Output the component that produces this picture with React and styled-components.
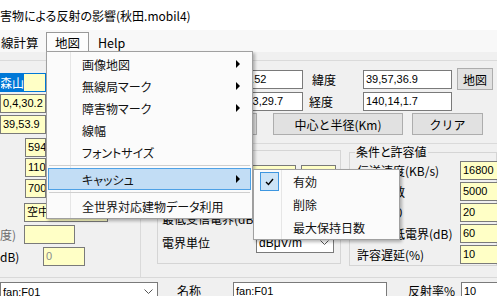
import styled, { createGlobalStyle } from "styled-components";

const GlobalStyle = createGlobalStyle`
  html, body {
    margin: 0;
    padding: 0;
  }
  body {
    width: 497px;
    height: 296px;
    overflow: hidden;
    background: #f0f0f0;
    font-family: "Noto Sans CJK JP", "Noto Sans", sans-serif;
    font-size: 12px;
    color: #000;
    font-feature-settings: "palt" 1;
  }
`;

const Window = styled.div`
  position: relative;
  width: 497px;
  height: 296px;
  overflow: hidden;
  display: flex;
  flex-direction: column;
`;

const TitleBar = styled.div`
  height: 30px;
  flex: none;
  background: #fff;
  display: flex;
  align-items: center;
  font-size: 12px;
  white-space: nowrap;
`;

const MenuBar = styled.div`
  height: 22px;
  flex: none;
  background: #f8f8f8;
  display: flex;
  align-items: stretch;
`;

const MenuTitle = styled.div`
  width: ${(p) => p.$w}px;
  box-sizing: border-box;
  display: flex;
  align-items: center;
  padding-left: ${(p) => p.$pad}px;
  margin-top: 2px;
  border: 1px solid ${(p) => (p.$open ? "#999" : "transparent")};
  border-bottom: none;
  background: ${(p) => (p.$open ? "#fdfdfd" : "transparent")};
  font-size: 12.5px;
`;

const Strip = styled.div`
  height: 8px;
  flex: none;
  border-bottom: 1px solid #dadada;
`;

const Upper = styled.div`
  height: 216px;
  flex: none;
  display: flex;
  border-bottom: 1px solid #d9d9d9;
`;

const LeftPanel = styled.div`
  width: 141px;
  flex: none;
  box-sizing: border-box;
  border-right: 1px solid #dadada;
  padding-top: 12px;
  display: flex;
  flex-direction: column;
`;

const RightPanel = styled.div`
  flex: 1;
  display: flex;
  flex-direction: column;
  min-width: 0;
`;

const Row = styled.div`
  display: flex;
  align-items: center;
  height: ${(p) => p.$h || 19}px;
  margin-top: ${(p) => p.$mt || 0}px;
  flex: none;
  white-space: nowrap;
`;

const Field = styled.div`
  width: ${(p) => p.$w}px;
  margin-left: ${(p) => p.$ml || 0}px;
  height: 19px;
  flex: none;
  box-sizing: border-box;
  border: 1px solid ${(p) => (p.$focus ? "#0078d7" : "#7a7a7a")};
  background: ${(p) => (p.$yellow ? "#ffffc6" : "#fff")};
  color: ${(p) => (p.$dim ? "#8a8a8a" : "#000")};
  font-family: "Liberation Sans", "Noto Sans CJK JP", sans-serif;
  font-size: 11px;
  line-height: 17px;
  padding-left: 2px;
  overflow: hidden;
  white-space: nowrap;
`;

const Selected = styled.span`
  background: #0078d7;
  color: #fff;
  font-family: "Noto Sans CJK JP", sans-serif;
  font-size: 12px;
  margin-left: -3px;
`;

const Label = styled.span`
  width: ${(p) => p.$w}px;
  margin-left: ${(p) => p.$ml || 0}px;
  flex: none;
  color: ${(p) => (p.$dim ? "#6d6d6d" : "#000")};
  font-size: 12px;
  overflow: hidden;
`;

const Button = styled.button`
  width: ${(p) => p.$w}px;
  margin-left: ${(p) => p.$ml || 0}px;
  height: 22px;
  flex: none;
  box-sizing: border-box;
  border: 1px solid #adadad;
  background: #e1e1e1;
  font-family: inherit;
  font-size: 12px;
  padding: 0;
  color: #000;
`;

const TopFields = styled.div`
  flex: none;
  padding: 7px 0 8px;
  border-bottom: 1px solid #dadada;
`;

const GroupRow = styled.div`
  flex: 1;
  display: flex;
  align-items: flex-start;
`;

const Group = styled.fieldset`
  margin: ${(p) => p.$mt}px 0 0 ${(p) => p.$ml}px;
  padding: 0;
  width: ${(p) => (p.$w ? `${p.$w}px` : "auto")};
  flex: ${(p) => (p.$w ? "none" : "1")};
  height: ${(p) => p.$h}px;
  box-sizing: border-box;
  border: 1px solid #d5d5d5;
  min-width: 0;
  display: flex;
  flex-direction: column;
`;

const Legend = styled.legend`
  padding: 0 1px;
  margin-left: 5px;
  line-height: 14px;
  font-size: 12px;
`;

const Select = styled.div`
  width: ${(p) => p.$w}px;
  margin-left: ${(p) => p.$ml || 0}px;
  height: ${(p) => p.$h || 21}px;
  flex: none;
  box-sizing: border-box;
  border: 1px solid #7a7a7a;
  background: #fff;
  display: flex;
  align-items: center;
  justify-content: space-between;
  padding: 0 4px 0 2px;
  font-family: "Liberation Sans", "Noto Sans CJK JP", sans-serif;
  font-size: ${(p) => p.$fs || 11}px;
`;

const BottomRow = styled.div`
  flex: 1;
  display: flex;
  align-items: flex-start;
  padding-top: 4px;
  white-space: nowrap;
`;

const Menu = styled.div`
  position: absolute;
  left: ${(p) => p.$x}px;
  top: ${(p) => p.$y}px;
  width: ${(p) => p.$w}px;
  box-sizing: border-box;
  padding: ${(p) => p.$pad}px 1px;
  border: 1px solid #a0a0a0;
  background: linear-gradient(
      to right,
      transparent ${(p) => p.$col}px,
      #e6e6e6 ${(p) => p.$col}px,
      #e6e6e6 ${(p) => p.$col + 1}px,
      transparent ${(p) => p.$col + 1}px
    ),
    #fbfbfb;
  box-shadow: 2px 2px 3px rgba(0, 0, 0, 0.28);
  z-index: 10;
`;

const Item = styled.div`
  height: ${(p) => p.$h}px;
  box-sizing: border-box;
  display: flex;
  align-items: center;
  padding-left: ${(p) => p.$pl}px;
  padding-right: 10px;
  border: 1px solid ${(p) => (p.$active ? "#4ea1e6" : "transparent")};
  background: ${(p) => (p.$active ? "#c2ddf5" : "transparent")};
  font-size: 12px;
  white-space: nowrap;
  color: #111;
`;

const Arrow = styled.span`
  margin-left: auto;
  width: 0;
  height: 0;
  border-left: 4px solid #000;
  border-top: 4px solid transparent;
  border-bottom: 4px solid transparent;
`;

const Separator = styled.div`
  height: 1px;
  margin: 2px 1px;
  background: #cfcfcf;
`;

const CheckBox = styled.span`
  width: 19px;
  height: 19px;
  margin-left: 2px;
  margin-right: 14px;
  box-sizing: border-box;
  border: 1px solid #3d96e0;
  background: #cce4f7;
  display: flex;
  align-items: center;
  justify-content: center;
`;

const SubText = styled.span`
  margin-left: ${(p) => p.$ml || 0}px;
`;

const Chevron = () => (
  <svg width="9" height="6" viewBox="0 0 9 6">
    <polyline points="0.5,0.5 4.5,4.5 8.5,0.5" fill="none" stroke="#555" strokeWidth="1" />
  </svg>
);

const Check = () => (
  <svg width="9" height="8" viewBox="0 0 9 8">
    <polyline points="1,4 3.5,6.5 8,1" fill="none" stroke="#000" strokeWidth="1.4" />
  </svg>
);

const mapItems = [
  { text: "画像地図", arrow: true },
  { text: "無線局マーク", arrow: true },
  { text: "障害物マーク", arrow: true },
  { text: "線幅" },
  { text: "フォントサイズ" },
];

const conditions = [
  ["伝送速度(KB/s)", "16800"],
  ["反射面数", "5000"],
  ["間仕切り", "20"],
  ["受信最低電界(dB)", "60"],
  ["許容遅延(%)", "10"],
];

const App = () => {
  return (
    <Window>
      <GlobalStyle />
      <TitleBar>害物による反射の影響(秋田.mobil4)</TitleBar>
      <MenuBar>
        <MenuTitle $w={46} $pad={0}>線計算</MenuTitle>
        <MenuTitle $w={43} $pad={8} $open>地図</MenuTitle>
        <MenuTitle $w={50} $pad={8}>Help</MenuTitle>
      </MenuBar>
      <Strip />
      <Upper>
        <LeftPanel>
          <Row>
            <Field $w={46} $yellow $focus>
              <Selected>森山</Selected>
            </Field>
          </Row>
          <Row $mt={2}>
            <Field $w={46} $yellow>0,4,30.2</Field>
          </Row>
          <Row $mt={2}>
            <Field $w={46} $yellow>39,53.9</Field>
          </Row>
          <Row $mt={4}>
            <Field $w={21} $ml={25} $yellow>594</Field>
          </Row>
          <Row $mt={1}>
            <Field $w={21} $ml={25} $yellow>110</Field>
          </Row>
          <Row $mt={2}>
            <Field $w={21} $ml={25} $yellow>700</Field>
          </Row>
          <Row $mt={5}>
            <Field $w={84} $ml={24} $yellow>空中</Field>
          </Row>
          <Row $mt={3}>
            <Label $w={24} $dim>度)</Label>
            <Field $w={51} $yellow />
          </Row>
          <Row $mt={3}>
            <Label $w={43}>dB)</Label>
            <Field $w={42} $yellow $dim>0</Field>
          </Row>
        </LeftPanel>
        <RightPanel>
          <TopFields>
            <Row $h={22}>
              <Field $w={103} $ml={59}>139,57,11.52</Field>
              <Label $w={51} $ml={9}>緯度</Label>
              <Field $w={89}>39,57,36.9</Field>
              <Button $w={36} $ml={5}>地図</Button>
            </Row>
            <Row $h={22}>
              <Field $w={103} $ml={59}>東経140,13,29.7</Field>
              <Label $w={54} $ml={6}>経度</Label>
              <Field $w={89}>140,14,1.7</Field>
            </Row>
            <Row $h={22} $mt={1}>
              <Button $w={82} $ml={34}>表示</Button>
              <Button $w={130} $ml={16}>中心と半径(Km)</Button>
              <Button $w={71} $ml={9}>クリア</Button>
            </Row>
          </TopFields>
          <GroupRow>
            <Group $ml={16} $w={184} $mt={6} $h={114}>
              <Row $mt={14}>
                <Field $w={96} $ml={42} $yellow>0</Field>
                <Field $w={35} $ml={5} $yellow>0</Field>
              </Row>
              <Row $mt={25}>
                <Label $w={170} $ml={4}>最低受信電界(dB)</Label>
              </Row>
              <Row $h={21} $mt={4}>
                <Label $w={94} $ml={4}>電界単位</Label>
                <Select $w={78} $fs={12}>
                  dBμV/m
                  <Chevron />
                </Select>
              </Row>
            </Group>
            <Group $ml={8} $mt={1} $h={121}>
              <Legend>条件と許容値</Legend>
              {conditions.map(([name, value]) => (
                <Row key={name} $mt={2}>
                  <Label $w={103} $ml={7}>{name}</Label>
                  <Field $w={45} $yellow>{value}</Field>
                </Row>
              ))}
            </Group>
          </GroupRow>
        </RightPanel>
      </Upper>
      <BottomRow>
        <Select $w={158} $h={19} $fs={11}>
          fan:F01
          <Chevron />
        </Select>
        <Label $w={56} $ml={19}>名称</Label>
        <Field $w={154}>fan:F01</Field>
        <Label $w={53} $ml={21}>反射率%</Label>
        <Field $w={40}>10</Field>
      </BottomRow>

      <Menu $x={46} $y={51} $w={207} $pad={1} $col={23}>
        {mapItems.map((m) => (
          <Item key={m.text} $h={22} $pl={33}>
            {m.text}
            {m.arrow && <Arrow />}
          </Item>
        ))}
        <Separator />
        <Item $h={22} $pl={33} $active>
          キャッシュ
          <Arrow />
        </Item>
        <Separator />
        <Item $h={22} $pl={33}>全世界対応建物データ利用</Item>
      </Menu>

      <Menu $x={253} $y={169} $w={147} $pad={0} $col={27}>
        <Item $h={23} $pl={2}>
          <CheckBox>
            <Check />
          </CheckBox>
          有効
        </Item>
        <Item $h={23} $pl={2}>
          <SubText $ml={35}>削除</SubText>
        </Item>
        <Item $h={23} $pl={2}>
          <SubText $ml={35}>最大保持日数</SubText>
        </Item>
      </Menu>
    </Window>
  );
};

export default App;
